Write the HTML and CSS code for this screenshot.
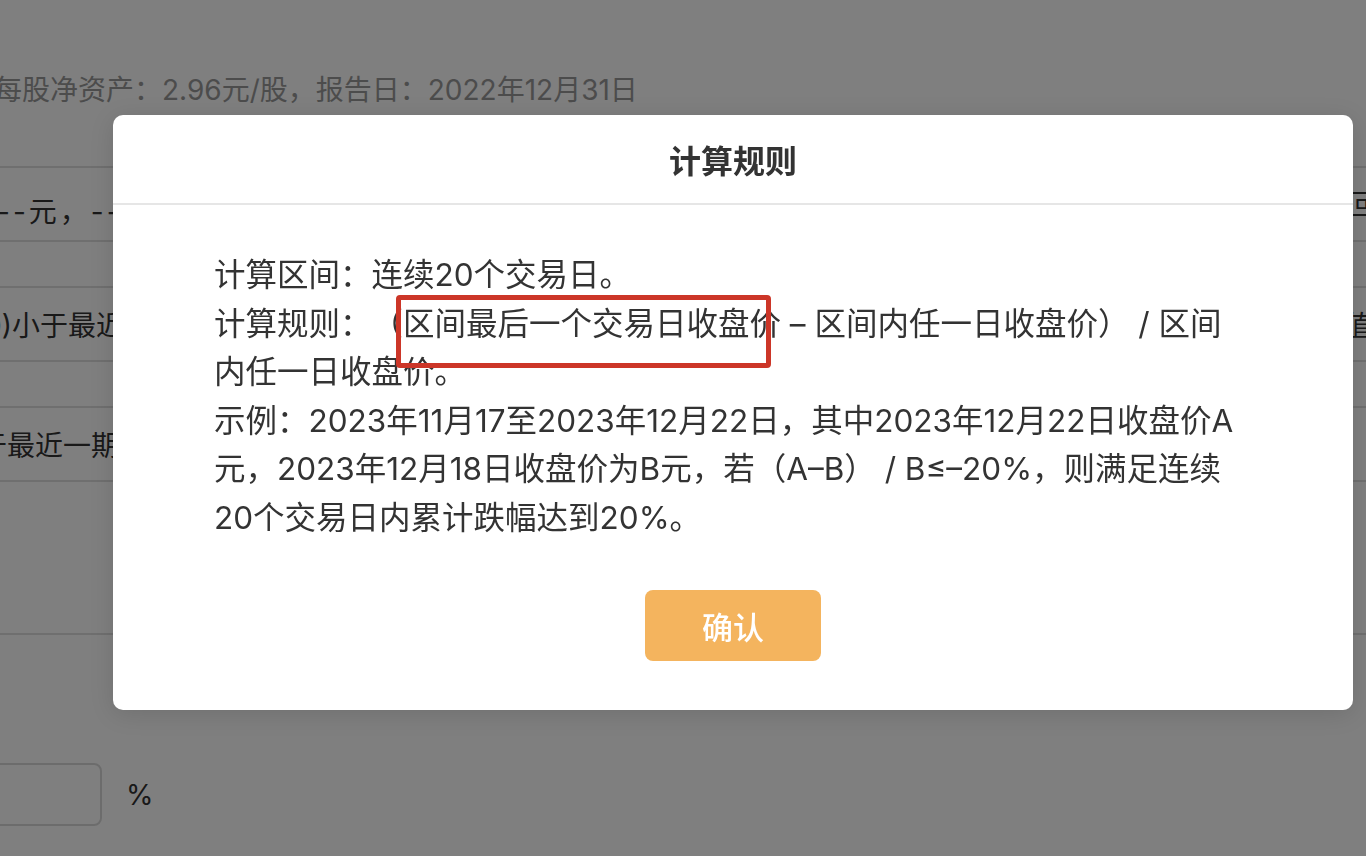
FILE: index.html
```html
<!DOCTYPE html>
<html lang="zh-CN">
<head>
  <meta charset="UTF-8">
  <meta name="viewport" content="width=device-width, initial-scale=1.0">
  <title>计算规则</title>
  <link rel="stylesheet" href="styles.css">
</head>
<body>
  <!-- Page behind the dialog -->
  <div class="page">
    <p class="summary">每股净资产：2.96元/股，报告日：2022年12月31日</p>

    <div class="rule-list">
      <div class="rule-row tall">
        <span class="cell-left first">--元，--元</span>
        <span class="cell-right back">返回</span>
      </div>
      <div class="rule-row short"></div>
      <div class="rule-row tall">
        <span class="cell-left ratio">0)小于最近一期</span>
        <span class="cell-right value">估值。</span>
      </div>
      <div class="rule-row short"></div>
      <div class="rule-row tall">
        <span class="cell-left recent">小于最近一期</span>
      </div>
      <div class="rule-row block"></div>
    </div>

    <div class="input-row">
      <div class="input-box"></div>
      <span class="unit">%</span>
    </div>
  </div>

  <div class="mask"></div>

  <!-- Rule dialog -->
  <div class="dialog">
    <div class="dialog-title">计算规则</div>
    <div class="dialog-body">
      <div class="line">计算区间：连续20个交易日。</div>
      <div class="line">计算规则：（区间最后一个交易日收盘价 – 区间内任一日收盘价） / 区间</div>
      <div class="line">内任一日收盘价。</div>
      <div class="line">示例：2023年11月17至2023年12月22日，其中2023年12月22日收盘价A</div>
      <div class="line">元，2023年12月18日收盘价为B元，若（A–B） / B≤–20%，则满足连续</div>
      <div class="line">20个交易日内累计跌幅达到20%。</div>
    </div>
    <div class="dialog-footer">
      <button class="confirm-btn">确认</button>
    </div>
  </div>

  <!-- Highlight mark -->
  <div class="mark"></div>
</body>
</html>
```

FILE: styles.css
```css
/* General styling */
html, body {
  margin: 0;
  height: 100%;
  overflow: hidden;
}
body {
  font-family: "Inter", "Noto Sans CJK SC", sans-serif;
  text-spacing-trim: space-all;
  background-color: #fff;
  color: #333;
  position: relative;
}

/* Page behind the mask */
.page {
  font-size: 28px;
}
.summary {
  margin: 0 0 0 -6px;
  height: 166px;
  box-sizing: border-box;
  padding-top: 70px;
  line-height: 40px;
  color: #999;
  white-space: nowrap;
}
.rule-list {
  border-top: 2px solid #dedede;
}
.rule-row {
  display: flex;
  justify-content: space-between;
  align-items: center;
  border-bottom: 2px solid #dedede;
  white-space: nowrap;
  color: #333;
}
.rule-row.tall {
  height: 72px;
}
.rule-row.short {
  height: 44px;
}
.rule-row.block {
  height: 151px;
}
.cell-left.first {
  margin-left: -3px;
  margin-top: 12px;
  letter-spacing: 3px;
}
.cell-left.ratio {
  margin-left: -16px;
}
.cell-left.recent {
  margin-left: -49px;
}
.cell-right.back {
  margin-right: -10px;
  margin-bottom: 2px;
}
.cell-right.value {
  margin-right: -34px;
}
.input-row {
  display: flex;
  align-items: center;
  margin-top: 128px;
  height: 63px;
}
.input-box {
  width: 140px;
  height: 63px;
  margin-left: -38px;
  border: 2px solid #d9d9d9;
  border-radius: 8px;
  box-sizing: border-box;
}
.unit {
  margin-left: 24px;
}

.mask {
  position: fixed;
  inset: 0;
  background-color: rgba(0, 0, 0, 0.5);
}

/* Dialog */
.dialog {
  position: absolute;
  left: 113px;
  top: 115px;
  width: 1240px;
  background-color: #fff;
  border-radius: 10px;
  box-shadow: 0 4px 24px rgba(0, 0, 0, 0.12);
}
.dialog-title {
  height: 88px;
  display: flex;
  align-items: center;
  justify-content: center;
  font-size: 32px;
  font-weight: 700;
  color: #333;
  border-bottom: 2px solid #e6e6e6;
}
.dialog-body {
  padding: 46px 101px 0;
  font-size: 31.5px;
  line-height: 48.6px;
  color: #333;
}
.line {
  white-space: pre;
}
.dialog-footer {
  display: flex;
  justify-content: center;
  padding: 47px 0 49px;
}
.confirm-btn {
  width: 176px;
  height: 71px;
  border: none;
  border-radius: 8px;
  background-color: #f4b45e;
  color: #fff;
  font-family: inherit;
  font-size: 31px;
  font-weight: 500;
  cursor: pointer;
}

/* Red annotation box */
.mark {
  position: absolute;
  left: 396px;
  top: 295px;
  width: 375px;
  height: 73px;
  border: 5px solid #cc3628;
  border-radius: 4px;
  box-sizing: border-box;
}
```
